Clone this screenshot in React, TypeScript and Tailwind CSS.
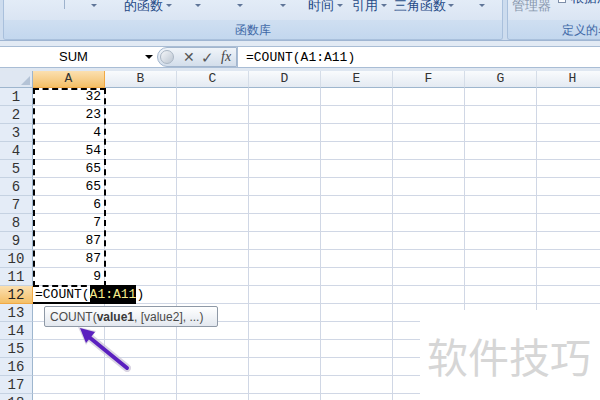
import React from 'react'

const COLS = ['A', 'B', 'C', 'D', 'E', 'F', 'G', 'H']
const VALUES = [32, 23, 4, 54, 65, 65, 6, 7, 87, 87, 9]
const ROWS = Array.from({ length: 18 }, (_, i) => i + 1)

function Tri({ ml }: { ml: string }) {
  // the small ribbon dropdown arrow
  return <span className={`${ml} mt-[4px] h-0 w-0 shrink-0 border-x-[3px] border-t-[3px] border-x-transparent border-t-[#5f7598]`} />
}

function Ribbon() {
  return (
    <div className="flex h-[41px] border-b border-[#9fb5d2] bg-[#cddcee] pl-[3px]">
      <div className="flex w-[500px] flex-col overflow-hidden rounded-b-[3px] border-x border-b border-[#a9c0dc]">
        <div className="flex h-[20px] items-start whitespace-nowrap bg-gradient-to-b from-[#e3ecf7] to-[#dae5f3] text-[13px] leading-[13px] text-[#1f4a86]">
          <span className="ml-[60px] h-[9px] w-px shrink-0 bg-[#9db2cc]" />
          <Tri ml="ml-[26px]" />
          <span className="ml-[27px] -mt-[1px] shrink-0">的函数</span>
          <Tri ml="ml-[3px]" />
          <Tri ml="ml-[23px]" />
          <Tri ml="ml-[36px]" />
          <Tri ml="ml-[37px]" />
          <span className="ml-[22px] -mt-[1px] shrink-0">时间</span>
          <Tri ml="ml-[3px]" />
          <span className="ml-[9px] -mt-[1px] shrink-0">引用</span>
          <Tri ml="ml-[3px]" />
          <span className="ml-[7px] -mt-[1px] shrink-0">三角函数</span>
          <Tri ml="ml-[2px]" />
          <Tri ml="ml-[25px]" />
        </div>
        <div className="flex flex-1 items-center justify-center bg-gradient-to-b from-[#cfdff1] to-[#c3d7ee] text-[12px] text-[#3d67a6]">
          函数库
        </div>
      </div>
      <div className="ml-[4px] flex flex-1 flex-col overflow-hidden rounded-bl-[3px] border-b border-l border-[#a9c0dc]">
        <div className="flex h-[20px] items-start whitespace-nowrap bg-gradient-to-b from-[#e3ecf7] to-[#dae5f3] text-[13px] leading-[13px]">
          <span className="ml-[4px] -mt-[1px] shrink-0 text-[#8797ad]">管理器</span>
          <span className="ml-[7px] -mt-[2px] h-[5px] w-[8px] shrink-0 border border-[#7d8ea8] bg-white" />
          <span className="ml-[5px] -mt-[9px] shrink-0 text-[#1f4a86]">根据所</span>
        </div>
        <div className="flex flex-1 items-center whitespace-nowrap bg-gradient-to-b from-[#cfdff1] to-[#c3d7ee] pl-[54px] text-[12px] text-[#3d67a6]">
          定义的名称
        </div>
      </div>
    </div>
  )
}

function FormulaBar() {
  return (
    <div className="flex h-[22px] border-y border-[#a9bdd5] bg-white font-['Liberation_Sans',sans-serif]">
      <div className="flex w-[157px] items-center">
        <span className="flex-1 pl-[2px] text-center text-[13px] text-black">SUM</span>
        <span className="mr-[4px] h-0 w-0 border-x-[4px] border-t-[4px] border-x-transparent border-t-black" />
      </div>
      <div className="flex w-[80px] items-center rounded-l-full border border-[#a3b6ce] bg-gradient-to-b from-[#f0f4f9] to-[#d3deeb]">
        <span className="ml-[2px] h-[14px] w-[14px] rounded-full border border-[#aab6c4] bg-gradient-to-br from-[#f4f6f9] to-[#bcc6d2]" />
        <span className="ml-[9px] text-[14px] leading-none text-[#555]">✕</span>
        <span className="ml-[6px] text-[15px] leading-none text-[#555]">✓</span>
        <span className="ml-[7px] font-['Liberation_Serif',serif] text-[14px] italic leading-none text-[#444]">fx</span>
      </div>
      <div className="flex flex-1 items-center border-l border-[#a9bdd5] pl-[8px] pt-[1px] font-['Liberation_Mono',monospace] text-[13px] text-black">
        =COUNT(A1:A11)
      </div>
    </div>
  )
}

function Sheet() {
  return (
    <div className="grid grid-cols-[33px_repeat(8,72px)] font-['Liberation_Mono',monospace]">
      <div className="relative h-[17px] border-b border-r border-[#9eb6ce] bg-[#dfe7f2]">
        <span className="absolute bottom-[2px] right-[2px] h-0 w-0 border-b-[9px] border-l-[9px] border-b-[#b4c3d6] border-l-transparent" />
      </div>
      {COLS.map((c) =>
        c === 'A' ? (
          <div key={c} className="flex h-[17px] items-center justify-center border-b border-r border-[#f1a945] bg-gradient-to-b from-[#fbe0b0] to-[#f3bf66] text-[13px] text-[#333]">
            {c}
          </div>
        ) : (
          <div key={c} className="flex h-[17px] items-center justify-center border-b border-r border-b-[#9eb6ce] border-r-[#d5dde8] bg-gradient-to-b from-[#f9fbfd] to-[#e4eaf2] text-[13px] text-[#333]">
            {c}
          </div>
        ),
      )}
      {ROWS.map((r) => (
        <React.Fragment key={r}>
          <div
            className={
              r === 12
                ? 'flex h-[18px] items-center justify-center border-b border-r border-[#f1a945] bg-gradient-to-b from-[#fbe0b0] to-[#f3bf66] pt-[1px] text-[14px] text-[#222]'
                : 'flex h-[18px] items-center justify-center border-b border-r border-b-[#c5d2e2] border-r-[#9eb6ce] bg-[#e4ecf7] pt-[1px] text-[14px] text-[#333]'
            }
          >
            {r}
          </div>
          {COLS.map((c) => {
            if (c === 'A' && r === 12) {
              return (
                <div key={c} className="relative z-10 flex h-[18px] items-center whitespace-nowrap border-b-2 border-black pl-[2px] pt-[1px] text-[13px] text-black">
                  =COUNT(<span className="bg-black text-[#f3e98a]">A1:A11</span>)
                </div>
              )
            }
            if (c === 'B' && r === 12) {
              return <div key={c} className="h-[18px] border-b border-r border-[#d0d7e5]" />
            }
            return (
              <div key={c} className="flex h-[18px] items-center justify-end border-b border-r border-[#d0d7e5] pr-[3px] pt-[1px] text-[13px] text-black">
                {c === 'A' && r <= 11 ? VALUES[r - 1] : ''}
              </div>
            )
          })}
        </React.Fragment>
      ))}
    </div>
  )
}

export default function App() {
  return (
    <div className="relative h-[400px] w-[600px] overflow-hidden bg-white">
      <Ribbon />
      <div className="h-[5px] bg-[#e2eaf4]" />
      <FormulaBar />
      <div className="h-[3px] bg-[#dfe7f1]" />
      <Sheet />

      {/* copy marquee round A1:A11 */}
      <div className="absolute left-[33px] top-[88px] h-[199px] w-[73px] border-2 border-dashed border-black" />

      {/* argument tooltip */}
      <div className="absolute left-[44px] top-[306px] z-20 flex h-[21px] w-[174px] items-center rounded-[2px] border border-[#8f99a6] bg-gradient-to-b from-white to-[#e3e8ef] pl-[5px] font-['Liberation_Sans',sans-serif] text-[12px] text-[#4a4a4a]">
        COUNT(<b className="text-[#3a3a3a]">value1</b>, [value2], ...)
      </div>

      {/* purple pointer arrow */}
      <svg className="absolute left-0 top-0 z-30" width="600" height="400">
        <line x1="127" y1="368" x2="88" y2="336" stroke="#c9c2d6" strokeWidth="8" strokeLinecap="round" opacity="0.7" />
        <polygon points="78,327 96,331 86,345" fill="#c9c2d6" opacity="0.7" />
        <line x1="127" y1="368" x2="89" y2="337" stroke="#5a1fbf" strokeWidth="4" strokeLinecap="round" />
        <polygon points="80,328 95,332 86,343" fill="#5a1fbf" />
      </svg>

      {/* watermark */}
      <div className="absolute left-[420px] top-[310px] z-20 flex h-[90px] w-[180px] items-center bg-white pl-[7px] font-['Noto_Sans_CJK_SC',sans-serif] text-[41px] leading-none text-[#d6d6d6]">
        软件技巧
      </div>
    </div>
  )
}
